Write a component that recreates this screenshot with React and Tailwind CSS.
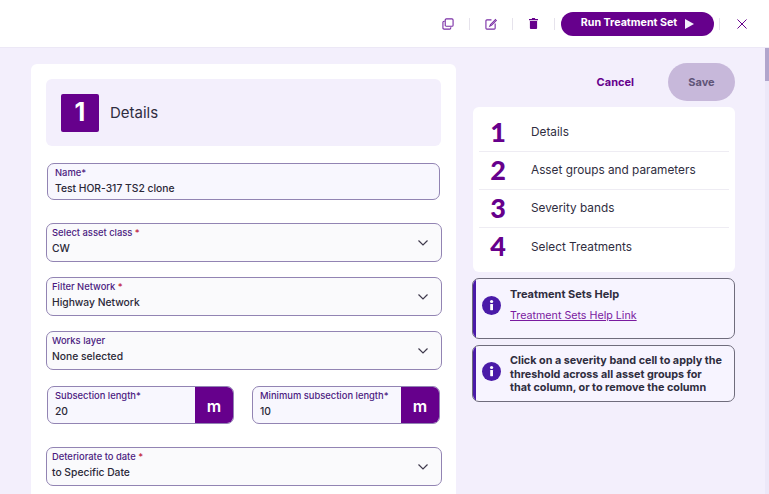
import React from "react";

function Chevron() {
  return (
    <svg width="12" height="12" viewBox="0 0 12 12" fill="none" stroke="#3f3a4d" strokeWidth="1.2" className="shrink-0">
      <path d="M1.5 3.5 6 8l4.5-4.5" />
    </svg>
  );
}

function Select({ label, value, required, mt }) {
  return (
    <div className={`-mr-[1px] flex h-[39px] items-center rounded-[7px] border border-[#9284b3] bg-[#fafafc] pl-[5px] pr-[12px] ${mt}`}>
      <div className="min-w-0 flex-1 self-start">
        <div className="text-[9.4px] leading-[12px] font-medium text-[#4b1a80] mt-[3px]">
          {label}
          {required && <span className="text-[#c0213c]"> *</span>}
        </div>
        <div className="text-[10.3px] leading-[14px] mt-[2px] font-medium text-[#2b2838]">{value}</div>
      </div>
      <Chevron />
    </div>
  );
}

function Unit({ label, value, className }) {
  return (
    <div className={`flex h-[38px] overflow-hidden rounded-[7px] border border-[#9284b3] bg-[#f8f7fe] ${className}`}>
      <div className="min-w-0 flex-1 pl-[7px]">
        <div className="text-[9.4px] leading-[12px] font-medium text-[#4b1a80] mt-[3px]">{label}</div>
        <div className="text-[10.3px] leading-[14px] mt-[2px] font-medium text-[#2b2838]">{value}</div>
      </div>
      <div className="flex w-[38px] items-center justify-center bg-[#66008c] pt-[1px] text-[16px] font-semibold text-white">m</div>
    </div>
  );
}

function Step({ n, label, last }) {
  return (
    <div className={`mx-[6px] flex h-[38px] items-center ${last ? "" : "border-b border-[#eeecf3]"}`}>
      <div className="w-[38px] pb-[3px] text-center text-[27px] leading-none font-black text-[#66008c] font-['Lato',sans-serif]">{n}</div>
      <div className="ml-[14px] mt-[1px] text-[11.8px] text-[#2f2d40]">{label}</div>
    </div>
  );
}

function Info({ children, className, iconClass }) {
  return (
    <div className={`relative flex overflow-hidden rounded-[7px] border border-[#6f6c7c] bg-[#f7f4ff] ${className}`}>
      <div className="w-[3px] shrink-0 bg-[#4a1aa8]" />
      <div className="flex w-[30px] shrink-0 justify-center">
        <svg width="19" height="19" viewBox="0 0 19 19" className={iconClass}>
          <circle cx="9.5" cy="9.5" r="9.5" fill="#4a1aa8" />
          <rect x="8.2" y="8" width="2.8" height="6.2" rx="0.4" fill="#fff" />
          <circle cx="9.6" cy="5.5" r="1.6" fill="#fff" />
        </svg>
      </div>
      <div className="ml-[4px] min-w-0 flex-1">{children}</div>
    </div>
  );
}

function Sep({ className }) {
  return <div className={`h-[12px] w-px bg-[#e6e3ec] ${className}`} />;
}

export default function App() {
  return (
    <div className="relative flex h-[494px] w-[769px] flex-col overflow-hidden bg-[#f3effc] font-['Inter',sans-serif]">
      <header className="flex h-[48px] shrink-0 items-center justify-end border-b border-[#ece8f6] bg-white pr-[22px]">
        <svg width="12" height="12" viewBox="0 0 13 13" fill="none" stroke="#7a2ea5" strokeWidth="1.2">
          <rect x="3.5" y="1" width="8.5" height="8" rx="1.2" />
          <path d="M3 3.5h-.8A1.2 1.2 0 0 0 1 4.7v6.1A1.2 1.2 0 0 0 2.2 12h6.1a1.2 1.2 0 0 0 1.2-1.2V10" />
        </svg>
        <Sep className="ml-[15px] mr-[15px]" />
        <svg width="12" height="12" viewBox="0 0 13 13" fill="none" stroke="#7a2ea5" strokeWidth="1.2">
          <path d="M7 2H2a1 1 0 0 0-1 1v8a1 1 0 0 0 1 1h8a1 1 0 0 0 1-1V6" />
          <path d="M11.8 1.2 6 7l-.8 1.8L7 8l5.7-5.8" />
        </svg>
        <Sep className="ml-[15px] mr-[16px]" />
        <svg width="9" height="11" viewBox="0 0 10 12" fill="#66008c">
          <path d="M3.5 0h3l.5 1h3v1.4H0V1h3zM1 3.2h8V11a1 1 0 0 1-1 1H2a1 1 0 0 1-1-1z" />
        </svg>
        <Sep className="ml-[16px] mr-[6px]" />
        <button className="flex h-[24px] w-[153px] items-center justify-center gap-[8px] rounded-full bg-[#66008c] text-[10.7px] font-bold text-white">
          Run Treatment Set
          <svg width="9" height="10" viewBox="0 0 9 10" fill="#f3effc"><path d="M0 0l9 5-9 5z" /></svg>
        </button>
        <Sep className="ml-[5px] mr-[17px]" />
        <svg width="10" height="10" viewBox="0 0 11 11" fill="none" stroke="#66008c" strokeWidth="1.1">
          <path d="M.5.5l10 10M10.5.5l-10 10" />
        </svg>
      </header>

      <main className="flex items-start pl-[31px] pt-[15px]">
        <section className="mt-[1px] w-[425px] shrink-0 rounded-t-[6px] bg-white px-[15px] pt-[15px] pb-[40px]">
          <div className="flex h-[67px] items-center rounded-[6px] bg-[#f3effc] pl-[15px]">
            <div className="flex h-[38px] w-[38px] items-center justify-center rounded-[2px] bg-[#66008c] text-[25px] font-bold text-white">1</div>
            <div className="ml-[11px] mt-[1px] text-[15px] text-[#2f2d40]">Details</div>
          </div>

          <div className="mx-[1px] mt-[17px] h-[37px] rounded-[7px] border border-[#9284b3] bg-[#f8f7fe] pl-[7px]">
            <div className="text-[9.4px] leading-[12px] font-medium text-[#4b1a80] mt-[3px]">Name*</div>
            <div className="text-[10.3px] leading-[14px] mt-[2px] font-medium text-[#2b2838]">Test HOR-317 TS2 clone</div>
          </div>

          <Select label="Select asset class" value="CW" required mt="mt-[23px]" />
          <Select label="Filter Network" value="Highway Network" required mt="mt-[15px]" />
          <Select label="Works layer" value="None selected" mt="mt-[15px]" />

          <div className="mx-[1px] mt-[16px] flex gap-[18px]">
            <Unit label="Subsection length*" value="20" className="w-[187px]" />
            <Unit label="Minimum subsection length*" value="10" className="w-[188px]" />
          </div>

          <Select label="Deteriorate to date" value="to Specific Date" required mt="mt-[23px]" />
        </section>

        <aside className="ml-[16px] w-[263px] shrink-0">
          <div className="flex h-[38px] items-center justify-end">
            <span className="mr-[34px] text-[11px] font-bold text-[#66008c]">Cancel</span>
            <button className="h-[38px] w-[67px] rounded-[19px] bg-[#c7b8da] text-[11px] font-bold text-[#5f5578]">Save</button>
          </div>
          <div className="ml-[1px] mt-[6px] h-[165px] rounded-[6px] bg-white pt-[6px]">
            <div className="pt-[1px]">
              <Step n="1" label="Details" />
              <Step n="2" label="Asset groups and parameters" />
              <Step n="3" label="Severity bands" />
              <Step n="4" label="Select Treatments" last />
            </div>
          </div>
          <Info className="mt-[6px] h-[61px]" iconClass="mt-[17px]">
            <div className="mt-[8px] text-[11px] leading-[14px] font-bold text-[#2f2d40]">Treatment Sets Help</div>
            <div className="mt-[8px] text-[10.7px] leading-[14px] text-[#7a1aa0] underline">Treatment Sets Help Link</div>
          </Info>
          <Info className="mt-[6px] h-[57px]" iconClass="mt-[16px]">
            <div className="mt-[8px] text-[10.8px] leading-[13.5px] font-bold text-[#2f2d40]">
              Click on a severity band cell to apply the<br />
              threshold across all asset groups for<br />
              that column, or to remove the column
            </div>
          </Info>
        </aside>
      </main>

      <div className="absolute right-0 top-[48px] h-[446px] w-[4px] bg-[#ece8f8]">
        <div className="h-[33px] w-full bg-[#b0a5cc]" />
      </div>
    </div>
  );
}
